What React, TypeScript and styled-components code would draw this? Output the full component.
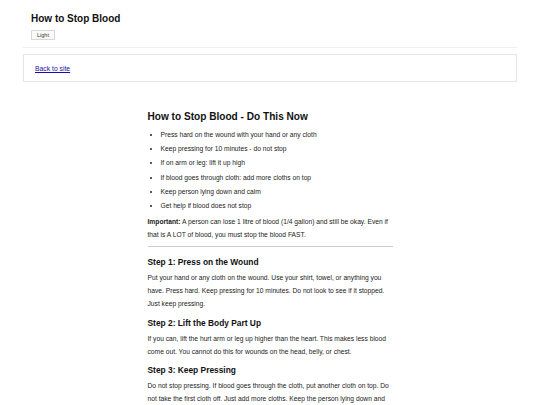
import React from 'react';
import styled, {createGlobalStyle} from 'styled-components';

const GlobalStyle = createGlobalStyle`
	html, body {
		margin: 0;
		padding: 0;
		background: #ffffff;
	}
	body {
		font-family: "Liberation Sans", Arial, sans-serif;
		color: #222;
	}
`;

const Page = styled.div`
	padding: 0 23px 40px;
`;

const Header = styled.header`
	padding: 12px 8px 7px;
	border-bottom: 1px solid #eeeeee;
`;

const SiteTitle = styled.h1`
	margin: 0;
	font-size: 10px;
	line-height: 13px;
	font-weight: 700;
	color: #111;
`;

const ThemeButton = styled.button`
	display: block;
	margin-top: 5px;
	height: 10px;
	padding: 0 5px;
	font-family: "Liberation Sans", Arial, sans-serif;
	font-size: 5.5px;
	line-height: 8px;
	color: #333;
	background: #fafafa;
	border: 1px solid #d8d8d8;
	border-radius: 0;
`;

const NavBox = styled.nav`
	display: flex;
	align-items: center;
	box-sizing: border-box;
	height: 28px;
	margin-top: 6px;
	padding: 0 11px;
	border: 1px solid #e6e6e6;
`;

const BackLink = styled.a`
	font-size: 6.8px;
	color: #1a0dab;
	text-decoration: underline;
`;

const Article = styled.main`
	width: 245px;
	margin: 28px auto 0;
	font-size: 6.7px;
	line-height: 12.8px;
	color: #222;
`;

const Title = styled.h2`
	margin: 0;
	font-size: 10.1px;
	line-height: 13px;
	font-weight: 700;
	color: #111;
`;

const QuickList = styled.ul`
	margin: 6px 0 0;
	padding-left: 13px;
`;

const QuickItem = styled.li`
	margin-bottom: 1.4px;
	line-height: 12.8px;
`;

const Para = styled.p<{$top?: number}>`
	margin: ${p => p.$top ?? 0}px 0 0;
`;

const Rule = styled.hr`
	margin: 4.5px 0 10.5px;
	border: 0;
	border-top: 1px solid #cccccc;
`;

const StepTitle = styled.h3<{$first?: boolean}>`
	margin: ${p => (p.$first ? 0 : 7)}px 0 4px;
	font-size: 8.4px;
	line-height: 11px;
	font-weight: 700;
	color: #111;
`;

const quickSteps = [
	'Press hard on the wound with your hand or any cloth',
	'Keep pressing for 10 minutes - do not stop',
	'If on arm or leg: lift it up high',
	'If blood goes through cloth: add more cloths on top',
	'Keep person lying down and calm',
	'Get help if blood does not stop',
];

const steps = [
	{
		title: 'Step 1: Press on the Wound',
		text: 'Put your hand or any cloth on the wound. Use your shirt, towel, or anything you have. Press hard. Keep pressing for 10 minutes. Do not look to see if it stopped. Just keep pressing.',
	},
	{
		title: 'Step 2: Lift the Body Part Up',
		text: 'If you can, lift the hurt arm or leg up higher than the heart. This makes less blood come out. You cannot do this for wounds on the head, belly, or chest.',
	},
	{
		title: 'Step 3: Keep Pressing',
		text: 'Do not stop pressing. If blood goes through the cloth, put another cloth on top. Do not take the first cloth off. Just add more cloths. Keep the person lying down and calm.',
	},
];

export default function App() {
	return (
		<>
			<GlobalStyle />
			<Page>
				<Header>
					<SiteTitle>How to Stop Blood</SiteTitle>
					<ThemeButton>Light</ThemeButton>
				</Header>
				<NavBox>
					<BackLink href="#">Back to site</BackLink>
				</NavBox>
				<Article>
					<Title>How to Stop Blood - Do This Now</Title>
					<QuickList>
						{quickSteps.map((item, index) => (
							<QuickItem key={index}>{item}</QuickItem>
						))}
					</QuickList>
					<Para $top={3}>
						<strong>Important:</strong> A person can lose 1 litre of blood (1/4 gallon) and still be okay. Even if
						that is A LOT of blood, you must stop the blood FAST.
					</Para>
					<Rule />
					{steps.map((step, index) => (
						<section key={index}>
							<StepTitle $first={index === 0}>{step.title}</StepTitle>
							<Para>{step.text}</Para>
						</section>
					))}
				</Article>
			</Page>
		</>
	);
}
